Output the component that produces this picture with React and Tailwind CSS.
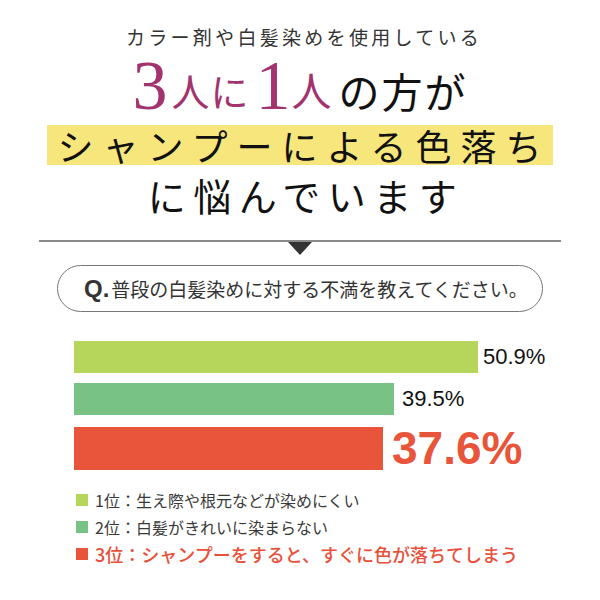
const bars = [
  { w: "w-[404px]", h: "h-[32px]", bg: "bg-[#b5d55b]", label: "50.9%", text: "text-[22px] text-[#111] ml-[5px]" },
  { w: "w-[320px]", h: "h-[32px]", bg: "bg-[#79c285]", label: "39.5%", text: "text-[22px] text-[#111] ml-[8px]" },
  { w: "w-[309px]", h: "h-[43px]", bg: "bg-[#e8553a]", label: "37.6%", text: "text-[46px] font-bold text-[#e8553a] ml-[9px]" },
];

const legend = [
  { sq: "bg-[#b5d55b]", text: "text-[16px] text-[#3a3a3a]", label: "1位：生え際や根元などが染めにくい" },
  { sq: "bg-[#79c285]", text: "text-[16px] text-[#3a3a3a]", label: "2位：白髪がきれいに染まらない" },
  { sq: "bg-[#e8553a]", text: "text-[18px] font-medium text-[#e8503a]", label: "3位：シャンプーをすると、すぐに色が落ちてしまう" },
];

export default function App() {
  return (
    <div className="w-[600px] h-[600px] bg-white overflow-hidden flex flex-col items-center pt-[25px] font-['Noto_Sans_CJK_JP',sans-serif]">
      {/* lead */}
      <p className="h-[22px] flex items-center leading-none text-[19px] tracking-[3.3px] pl-[8px] text-[#333] whitespace-nowrap">
        カラー剤や白髪染めを使用している
      </p>

      {/* headline */}
      <h1 className="mt-[8px] h-[66px] flex items-end leading-none font-normal whitespace-nowrap">
        <span className="font-['Liberation_Serif',serif] text-[70px] text-[#a2336e]">3</span>
        <span className="mb-[12px] ml-[4px] text-[38px] tracking-[1px] text-[#a2336e]">人に</span>
        <span className="ml-[6px] font-['Liberation_Serif',serif] text-[70px] text-[#a2336e]">1</span>
        <span className="mb-[12px] ml-[1px] text-[40px] text-[#a2336e]">人</span>
        <span className="mb-[10px] ml-[7px] text-[41px] tracking-[2px] text-[#111]">の方が</span>
      </h1>

      <div className="mt-[4px] w-[506px] h-[40px] bg-[#f6e67b] flex items-center justify-center pl-[8px]">
        <span className="text-[36px] leading-none tracking-[9px] text-[#111] whitespace-nowrap">シャンプーによる色落ち</span>
      </div>

      <p className="mt-[8px] h-[44px] flex items-center leading-none text-[38px] tracking-[7.5px] pl-[12px] text-[#111] whitespace-nowrap">
        に悩んでいます
      </p>

      {/* divider */}
      <div className="mt-[23px] w-[522px] h-[2px] bg-[#8a8a8a]" />
      <div className="w-0 h-0 border-l-[12px] border-r-[12px] border-t-[13px] border-l-transparent border-r-transparent border-t-[#333]" />

      {/* question */}
      <div className="mt-[10px] w-[486px] h-[47px] rounded-full border border-[#777] flex items-center pl-[26px]">
        <span className="font-['Liberation_Sans',sans-serif] font-bold text-[24px] text-[#333] leading-none">Q.</span>
        <span className="ml-[2px] text-[19px] text-[#333] leading-none whitespace-nowrap">普段の白髪染めに対する不満を教えてください。</span>
      </div>

      {/* chart */}
      <div className="mt-[29px] w-[600px] pl-[74px] flex flex-col gap-[10px]">
        {bars.map((b) => (
          <div key={b.label} className="flex items-center">
            <div className={`${b.w} ${b.h} ${b.bg}`} />
            <span className={`font-['Liberation_Sans',sans-serif] leading-none ${b.text}`}>{b.label}</span>
          </div>
        ))}
      </div>

      {/* legend */}
      <div className="mt-[20px] w-[600px] pl-[76px] flex flex-col gap-[9px]">
        {legend.map((l) => (
          <div key={l.label} className="h-[18px] flex items-center">
            <div className={`w-[12px] h-[12px] ${l.sq}`} />
            <span className={`ml-[7px] leading-none whitespace-nowrap ${l.text}`}>{l.label}</span>
          </div>
        ))}
      </div>
    </div>
  );
}
